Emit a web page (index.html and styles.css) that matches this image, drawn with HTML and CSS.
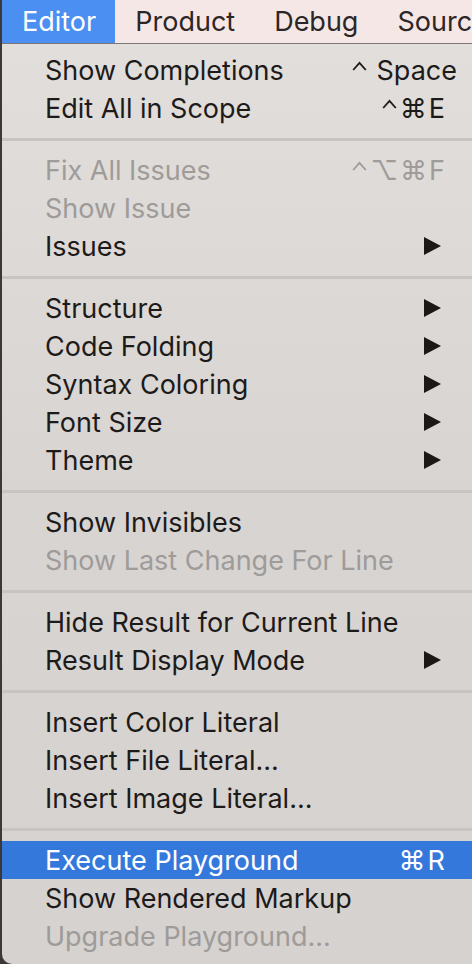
FILE: index.html
```html
<!DOCTYPE html>
<html>
<head>
<meta charset="utf-8">
<link rel="stylesheet" href="styles.css">
</head>
<body>
<div class="screen">
  <div class="menubar">
    <div class="bar-item active">Editor</div>
    <div class="bar-item">Product</div>
    <div class="bar-item">Debug</div>
    <div class="bar-item">Source Control</div>
  </div>
  <div class="menu">
    <div class="row"><span class="label">Show Completions</span><span class="key key-wide"><svg class="caret" viewBox="0 0 15 10"><polyline points="1.2,9 7.5,1.8 13.8,9"/></svg>Space</span></div>
    <div class="row"><span class="label">Edit All in Scope</span><span class="key"><svg class="caret" viewBox="0 0 15 10"><polyline points="1.2,9 7.5,1.8 13.8,9"/></svg>⌘E</span></div>
    <div class="sep"></div>
    <div class="row disabled"><span class="label">Fix All Issues</span><span class="key"><svg class="caret" viewBox="0 0 15 10"><polyline points="1.2,9 7.5,1.8 13.8,9"/></svg>⌥⌘F</span></div>
    <div class="row disabled"><span class="label">Show Issue</span></div>
    <div class="row"><span class="label">Issues</span><span class="arrow"></span></div>
    <div class="sep"></div>
    <div class="row"><span class="label">Structure</span><span class="arrow"></span></div>
    <div class="row"><span class="label">Code Folding</span><span class="arrow"></span></div>
    <div class="row"><span class="label">Syntax Coloring</span><span class="arrow"></span></div>
    <div class="row"><span class="label">Font Size</span><span class="arrow"></span></div>
    <div class="row"><span class="label">Theme</span><span class="arrow"></span></div>
    <div class="sep"></div>
    <div class="row"><span class="label">Show Invisibles</span></div>
    <div class="row disabled"><span class="label">Show Last Change For Line</span></div>
    <div class="sep"></div>
    <div class="row"><span class="label">Hide Result for Current Line</span></div>
    <div class="row"><span class="label">Result Display Mode</span><span class="arrow"></span></div>
    <div class="sep"></div>
    <div class="row"><span class="label">Insert Color Literal</span></div>
    <div class="row"><span class="label">Insert File Literal...</span></div>
    <div class="row"><span class="label">Insert Image Literal...</span></div>
    <div class="sep"></div>
    <div class="row selected"><span class="label">Execute Playground</span><span class="key">⌘R</span></div>
    <div class="row"><span class="label">Show Rendered Markup</span></div>
    <div class="row disabled"><span class="label">Upgrade Playground...</span></div>
  </div>
</div>
</body>
</html>
```

FILE: styles.css
```css
html, body {
  margin: 0;
  padding: 0;
  background: #3a3838;
}
.screen {
  width: 472px;
  height: 964px;
  overflow: hidden;
  font-family: "Inter", "Liberation Sans", sans-serif;
  font-size: 27px;
  display: flex;
  flex-direction: column;
}
.menubar {
  height: 43px;
  background: #f6e7e7;
  border-bottom: 1px solid #7d7676;
  display: flex;
  align-items: stretch;
  margin-left: 2px;
  white-space: nowrap;
  flex-shrink: 0;
  overflow: hidden;
}
.bar-item {
  padding: 0 19px 0 20px;
  display: flex;
  align-items: center;
  color: #2c2626;
}
.bar-item.active {
  background: #4a8ff1;
  color: #ffffff;
}
.menu {
  margin-left: 2px;
  background: linear-gradient(#e2dedc, #d8d4d2 50%, #d6d2d0);
  padding: 7px 0 7px 0;
  border-bottom-left-radius: 10px;
  flex: 1;
}
.row {
  height: 38px;
  display: flex;
  align-items: center;
  padding: 0 27px 0 43px;
  color: #1d1b1a;
  white-space: nowrap;
}
.row .label {
  flex: 1;
}
.row.disabled {
  color: #9e9b99;
}
.row.selected {
  background: #3478dc;
  color: #ffffff;
}
.key {
  text-align: right;
  letter-spacing: 2px;
  margin-right: -2px;
}
.caret {
  width: 15px;
  height: 10px;
  vertical-align: 9px;
  margin-right: 3px;
  fill: none;
  stroke: currentColor;
  stroke-width: 1.8;
}
.key-wide {
  margin-right: -12px;
  letter-spacing: 0;
}
.key-wide .caret {
  margin-right: 10px;
}
.arrow {
  width: 0;
  height: 0;
  border-top: 9px solid transparent;
  border-bottom: 9px solid transparent;
  border-left: 17px solid #1b1918;
  margin-right: 4px;
}
.sep {
  height: 24px;
  display: flex;
  align-items: center;
}
.sep::before {
  content: "";
  display: block;
  width: 100%;
  height: 3px;
  background: #c8c4c2;
}
```
